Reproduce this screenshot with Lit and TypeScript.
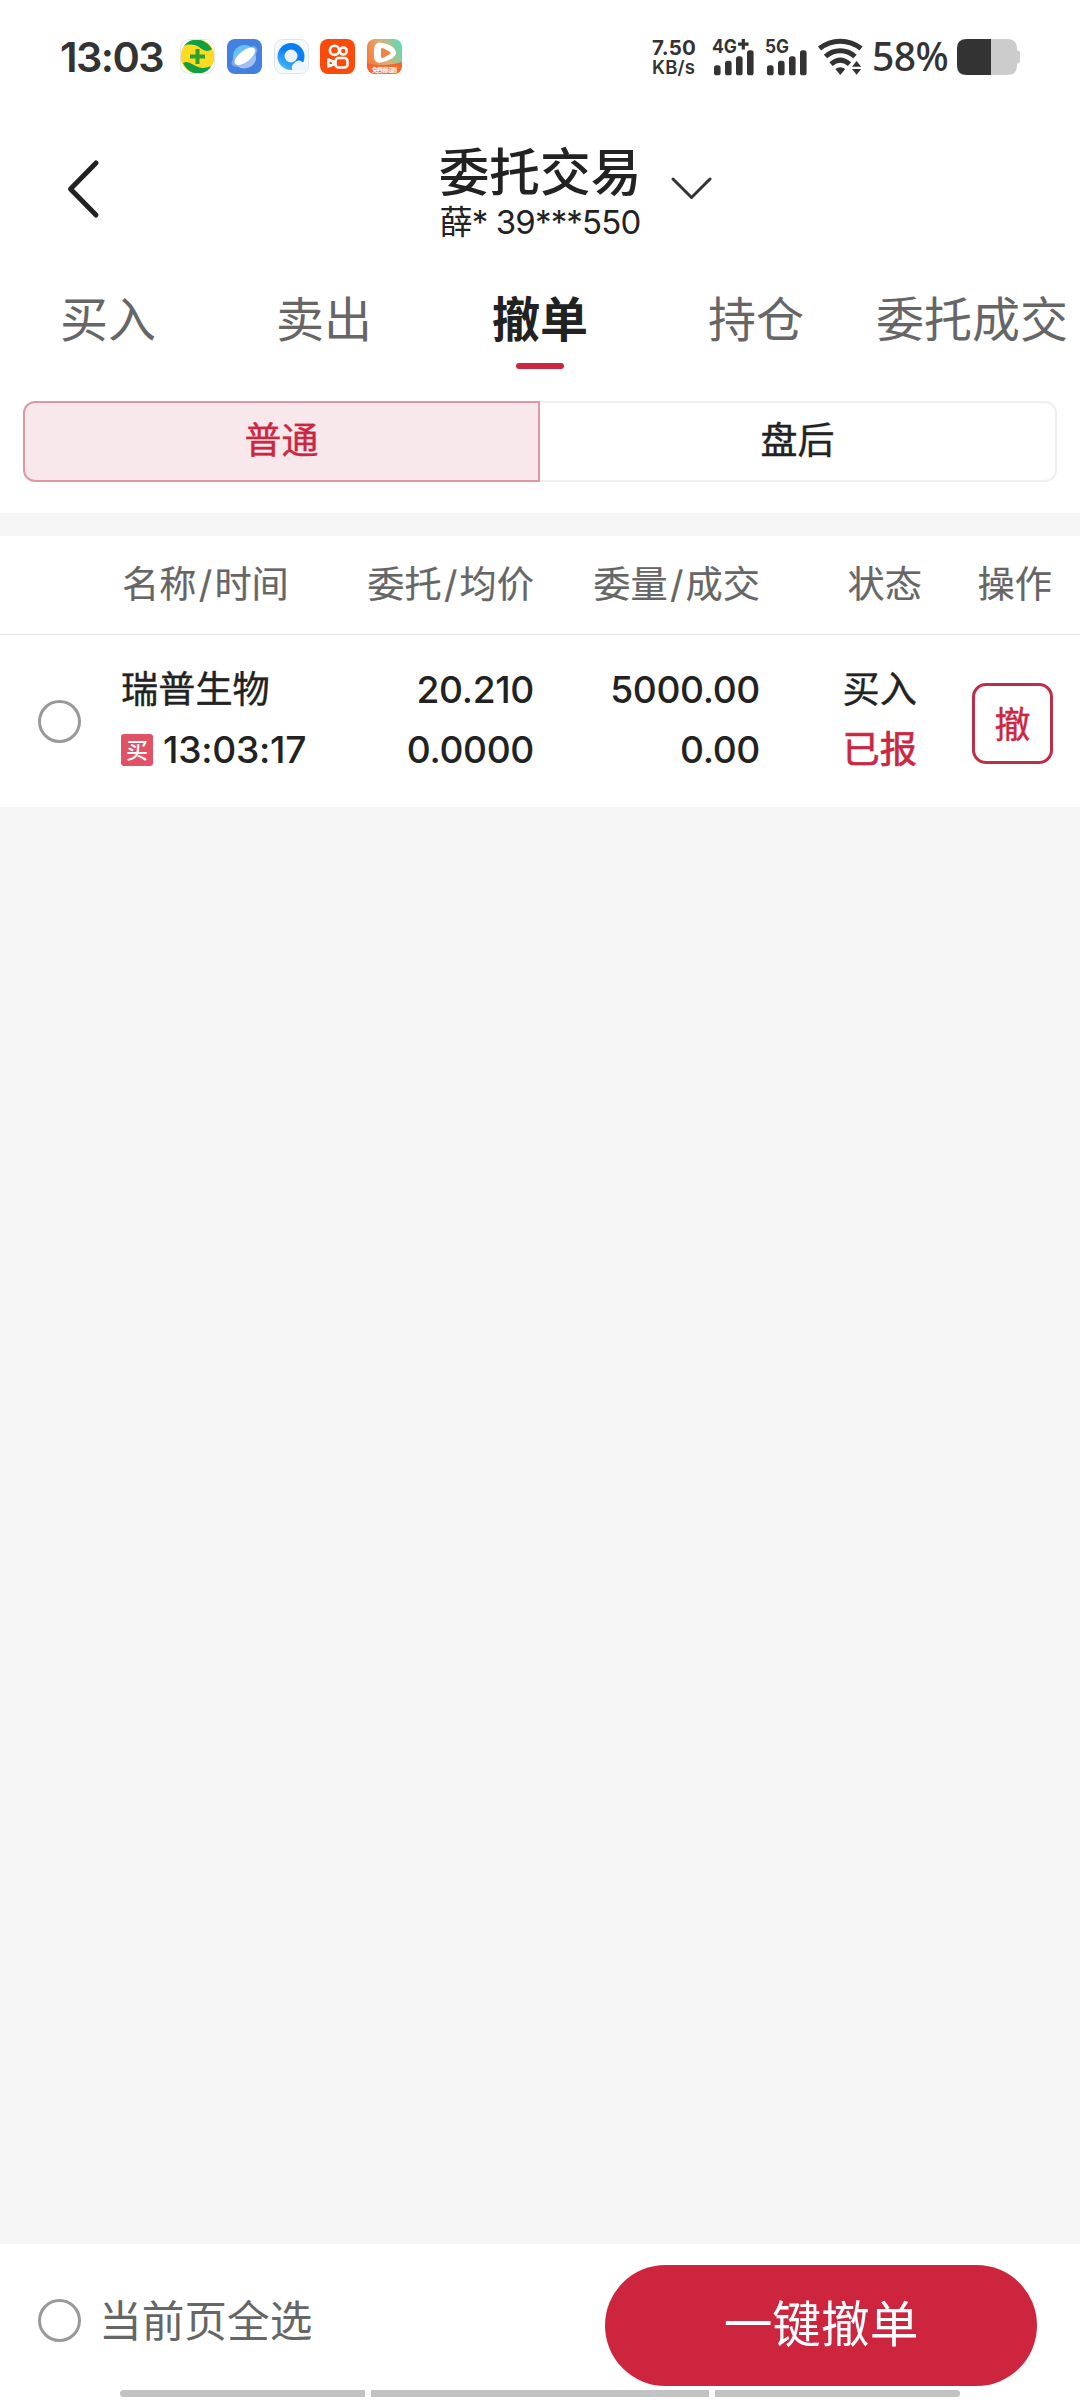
import { LitElement, html, css, svg } from "lit";
import { customElement, property } from "lit/decorators.js";
import { classMap } from "lit/directives/class-map.js";

@customElement("status-bar")
class StatusBar extends LitElement {
  static styles = css`
    :host { display: block; }
    .bar { display: flex; align-items: flex-start; height: 113px; box-sizing: border-box; padding: 39px 60px 0 60px; color: #333; }
    .clock { font-size: 41.5px; line-height: 36px; font-weight: 560; width: 120px; letter-spacing: -1.6px; white-space: nowrap; }
    .apps { display: flex; gap: 11.8px; }
    .apps svg { display: block; width: 35px; height: 35px; }
    .right { margin-left: auto; display: flex; }
    .speed { display: flex; flex-direction: column; width: 60px; font-weight: 700; font-size: 20.5px; line-height: 17px; white-space: nowrap; letter-spacing: 0.3px; }
    .speed .unit { font-size: 18.5px; line-height: 22px; font-weight: 600; letter-spacing: 0.2px; }
    .radio { display: block; width: 160px; height: 38px; overflow: visible; }
    .radio text { font: 700 18.5px Inter, sans-serif; }
    .pct { font-family: "Noto Sans", sans-serif; font-size: 39px; line-height: 34px; font-weight: 500; width: 85px; letter-spacing: -0.5px; white-space: nowrap; }
    .batt { display: block; width: 63px; height: 36px; }
  `;

  private bars(x: number) {
    return [10, 14.5, 19, 25].map(
      (h, i) => svg`<rect x=${x + i * 11} y=${36.3 - h} width="6.6" height=${h} rx="2.6" fill="#333"/>`
    );
  }

  render() {
    return html`
      <div class="bar">
        <div class="clock">13:03</div>
        <div class="apps">
          <svg viewBox="0 0 35 35">
            <defs><clipPath id="c"><rect x="1" y="1" width="33" height="33" rx="9"/></clipPath></defs>
            <rect x=".5" y=".5" width="34" height="34" rx="9" fill="#fff" stroke="#e2e6e2"/>
            <g clip-path="url(#c)">
              <circle cx="17.5" cy="17.5" r="17" fill="#fddb22"/>
              <path d="M4 7C9 -1 24 -3 32 10C27 14 23 11 19 8C14 5 8 5 4 7Z" fill="#0f9f45"/>
              <path d="M3 24C8 21 11 25 16 27C21 30 27 29 31 27C27 36 10 39 3 24Z" fill="#0f9f45"/>
            </g>
            <path d="M17.5 10v15M10 17.5h15" stroke="#2c9f35" stroke-width="4"/>
          </svg>
          <svg viewBox="0 0 35 35">
            <rect width="35" height="35" rx="8" fill="#4380e0"/>
            <circle cx="17.5" cy="17.5" r="11.5" fill="#62c3f4"/>
            <path d="M9 25.5A11.5 11.5 0 0 0 29 17Z" fill="#a6c0f2"/>
            <ellipse cx="17.5" cy="17.5" rx="15" ry="6.5" transform="rotate(-35 17.5 17.5)" fill="#9bb8ef" opacity=".7"/>
            <ellipse cx="18" cy="17.3" rx="12.3" ry="5.6" transform="rotate(-38 18 17.3)" fill="#fff"/>
          </svg>
          <svg viewBox="0 0 35 35">
            <defs><linearGradient id="q" x1="0" y1="1" x2=".7" y2="0"><stop offset="0" stop-color="#5cc8fd"/><stop offset=".6" stop-color="#0b7ff2"/></linearGradient></defs>
            <rect x=".5" y=".5" width="34" height="34" rx="8" fill="#f5f8fc" stroke="#dfe3e8"/>
            <circle cx="17" cy="17.5" r="13.5" fill="url(#q)"/>
            <circle cx="17" cy="17" r="6.5" fill="#eaf1f8"/>
            <path d="M19 31.5a4.500 4.500 0 0 1 1-7a5 5 0 0 1 8-1.500a4.500 4.500 0 0 1 2 8.500Z" fill="#eef5fc"/>
          </svg>
          <svg viewBox="0 0 35 35">
            <rect width="35" height="35" rx="8" fill="#fb4b0a"/>
            <g fill="none" stroke="#fff" stroke-width="2.6" stroke-linejoin="round">
              <circle cx="14.5" cy="11.3" r="4.6"/><circle cx="23.3" cy="12" r="3.5"/>
              <rect x="15.5" y="19" width="12" height="9.5" rx="3"/>
              <path d="M8.3 20.5v7l5-2v-3Z"/>
            </g>
          </svg>
          <svg viewBox="0 0 35 35">
            <defs><linearGradient id="v" x1="0" y1=".6" x2="1" y2=".2"><stop offset="0" stop-color="#f87b35"/><stop offset=".5" stop-color="#dcae76"/><stop offset="1" stop-color="#5bdcb8"/></linearGradient></defs>
            <rect width="35" height="35" rx="8" fill="url(#v)"/>
            <path d="M0 24Q17 29 35 23V27a8 8 0 0 1-8 8H8a8 8 0 0 1-8-8Z" fill="#f4662e"/>
            <path d="M12 4.5Q8 6 8 11V17Q8 24 14 22.5Q28 19 28 13.5Q26 6 12 4.5Z" fill="#fff" stroke="#fff" stroke-width="2" stroke-linejoin="round"/>
            <path d="M15.5 10.5v7l6.5-3.5Z" fill="#ec8445" stroke="#ec8445" stroke-width="3" stroke-linejoin="round"/>
            <text x="17.5" y="33" text-anchor="middle" font-size="6" font-weight="700" fill="#fff" font-family="Noto Sans CJK SC, sans-serif" textLength="25">免费看短剧</text>
          </svg>
        </div>
        <div class="right">
          <div class="speed"><span>7.50</span><span class="unit">KB/s</span></div>
          <svg class="radio" viewBox="0 0 160 38">
            <text x="0" y="14" fill="#333" textLength="25" lengthAdjust="spacingAndGlyphs">4G</text>
            <path d="M31.3 0v10.4M26 5.2h10.6" stroke="#333" stroke-width="3.2"/>
            ${this.bars(2)}
            <text x="53" y="14" fill="#333" textLength="24" lengthAdjust="spacingAndGlyphs">5G</text>
            ${this.bars(55)}
            <g fill="none" stroke="#333" stroke-width="5">
              <path d="M107.5 9.5C119.5 -.3 137 -.3 149 9.5"/>
              <path d="M113.5 17.5C122 9.8 134.5 9.8 143 17.5"/>
              <path d="M119 25.2C125 20 131.5 20 137.5 25.2"/>
            </g>
            <path d="M123.3 30Q128.3 26.7 133.3 30L128.3 36Z" fill="#333"/>
            <path d="M140 27.7l4.6-5.7 4.6 5.7ZM140 30h9.2l-4.6 5.7Z" fill="#333"/>
          </svg>
          <div class="pct">58%</div>
          <svg class="batt" viewBox="0 0 63 36">
            <path d="M34 0H50Q60 0 60 9V11.5Q63 11.5 63 14V22Q63 24.5 60 24.5V27Q60 36 50 36H34Z" fill="#ccc"/>
            <path d="M34 0H10Q0 0 0 9V27Q0 36 10 36H34Z" fill="#333"/>
          </svg>
        </div>
      </div>
    `;
  }
}

@customElement("radio-ring")
class RadioRing extends LitElement {
  static styles = css`
    :host { display: block; width: 43px; height: 43px; flex: none; }
    .ring { width: 43px; height: 43px; box-sizing: border-box; border: 3px solid #999; border-radius: 50%; }
  `;
  render() {
    return html`<div class="ring"></div>`;
  }
}

interface Order {
  name: string;
  time: string;
  price: string;
  avg: string;
  qty: string;
  filled: string;
  side: string;
  state: string;
}

@customElement("order-row")
class OrderRow extends LitElement {
  @property({ attribute: false }) order!: Order;

  static styles = css`
    :host { display: block; }
    .row { display: grid; grid-template-columns: 121px 190px 223px 226px 157px 163px; height: 172px; background: #fff; color: #222; font-size: 37.2px; font-weight: 450; line-height: 60px; white-space: nowrap; }
    .pick { padding: 65px 0 0 38px; }
    .cell { padding-top: 25px; display: flex; flex-direction: column; align-items: flex-start; }
    .name { font-size: 37.2px; font-weight: 400; -webkit-text-stroke: 0.4px currentColor; }
    .num { align-items: flex-end; letter-spacing: -0.35px; }
    .stamp { display: flex; align-items: center; gap: 10px; letter-spacing: -0.25px; }
    .badge { width: 32px; height: 32px; border-radius: 3px; background: #e05265; color: #fff; font-size: 22px; line-height: 32px; text-align: center; }
    .state { align-items: flex-end; font-weight: 400; -webkit-text-stroke: 0.4px currentColor; }
    .red { color: #ca2742; -webkit-text-stroke-width: 0.7px; }
    .act { padding: 48px 0 0 55px; }
    .cancel { width: 81px; height: 81px; box-sizing: border-box; border: 3px solid #c02d46; border-radius: 14px; color: #ca2742; font-size: 36px; font-weight: 400; -webkit-text-stroke: 0.4px currentColor; line-height: 79px; text-align: center; }
  `;

  render() {
    const o = this.order;
    return html`
      <div class="row">
        <div class="pick"><radio-ring></radio-ring></div>
        <div class="cell">
          <span class="name">${o.name}</span>
          <span class="stamp"><span class="badge">${o.side[0]}</span><span>${o.time}</span></span>
        </div>
        <div class="cell num"><span>${o.price}</span><span>${o.avg}</span></div>
        <div class="cell num"><span>${o.qty}</span><span>${o.filled}</span></div>
        <div class="cell state"><span>${o.side}</span><span class="red">${o.state}</span></div>
        <div class="act"><div class="cancel">撤</div></div>
      </div>
    `;
  }
}

@customElement("app-root")
class AppRoot extends LitElement {
  static styles = css`
    :host { display: block; font-family: Inter, "Noto Sans CJK SC", sans-serif; }
    .page { display: flex; flex-direction: column; width: 1080px; height: 2400px; background: #f5f5f5; overflow: hidden; }
    .top { background: #fff; height: 513px; display: flex; flex-direction: column; }
    .head { display: grid; grid-template-columns: 1fr 200px 1fr; height: 153px; color: #222; }
    .back { display: block; width: 34px; height: 60px; margin: 46px 0 0 66px; }
    .down { display: block; width: 41px; height: 24px; margin: 64px 0 0 31px; }
    .title { display: flex; flex-direction: column; align-items: center; white-space: nowrap; }
    .name { font-size: 50.7px; line-height: 60px; font-weight: 500; margin-top: 30px; }
    .acct { font-size: 33px; line-height: 36px; letter-spacing: -0.85px; margin-top: 1px; }
    .tabs { display: grid; grid-template-columns: repeat(5, 216px); height: 135px; }
    .tab { display: flex; flex-direction: column; align-items: center; font-size: 48px; line-height: 60px; padding-top: 24px; color: #666; white-space: nowrap; }
    .tab.on { font-weight: 700; color: #222; }
    .tab.on::after { content: ""; width: 48px; height: 6px; border-radius: 3px; background: #ca2742; margin-top: 13px; }
    .seg { display: grid; grid-template-columns: 1fr 1fr; margin: 0 23px; height: 81px; font-size: 37px; -webkit-text-stroke: 0.4px currentColor; line-height: 76px; text-align: center; color: #222; }
    .opt { box-sizing: border-box; border: 2px solid #efefef; border-left: 0; border-radius: 0 12px 12px 0; }
    .opt.on { border: 2px solid #dd98a4; border-radius: 12px 0 0 12px; background: #f9e8eb; color: #ca2742; }
    .cols { display: grid; grid-template-columns: 122px 189px 223px 226px 162px 130px; background: #fff; margin-top: 23px; height: 99px; box-sizing: border-box; border-bottom: 1px solid #e4e4e4; font-size: 37.2px; line-height: 97px; color: #666; white-space: nowrap; -webkit-text-stroke: 0.2px currentColor; }
    .r { text-align: right; }
    .slash { margin: 0 2.3px; }
    .foot { margin-top: auto; height: 156px; background: #fff; display: flex; flex-direction: column; }
    .bar { display: flex; align-items: flex-start; height: 146px; padding: 0 43px 0 38px; }
    .bar radio-ring { margin-top: 55px; }
    .all { font-size: 42.7px; line-height: 60px; color: #666; margin: 48px 0 0 18px; }
    .go { margin: 21px 0 0 auto; width: 432px; height: 121px; border-radius: 61px; background: #ce253f; color: #fff; font-size: 48.7px; line-height: 120px; text-align: center; }
    .nav { display: flex; gap: 6px; padding-left: 120px; }
    .nav i { height: 7px; background: #c2c2c2; width: 338px; }
    .nav i:first-child { width: 245px; border-radius: 4px 0 0 4px; }
    .nav i:last-child { width: 245px; border-radius: 0 4px 4px 0; }
  `;

  private tabs = ["买入", "卖出", "撤单", "持仓", "委托成交"];
  private heads = [["名称", "时间"], ["委托", "均价"], ["委量", "成交"], ["状态"], ["操作"]];
  private orders: Order[] = [
    { name: "瑞普生物", time: "13:03:17", price: "20.210", avg: "0.0000", qty: "5000.00", filled: "0.00", side: "买入", state: "已报" },
  ];

  render() {
    return html`
      <div class="page">
        <div class="top">
          <status-bar></status-bar>
          <div class="head">
            <svg class="back" viewBox="0 0 34 60"><path d="M30 4L4.5 30L30 56" fill="none" stroke="#222" stroke-width="5" stroke-linecap="round" stroke-linejoin="round"/></svg>
            <div class="title"><div class="name">委托交易</div><div class="acct">薛* 39***550</div></div>
            <svg class="down" viewBox="0 0 41 24"><path d="M2 2L20.5 20.5L39 2" fill="none" stroke="#333" stroke-width="3" stroke-linecap="round" stroke-linejoin="round"/></svg>
          </div>
          <div class="tabs">
            ${this.tabs.map((t, i) => html`<div class=${classMap({ tab: true, on: i === 2 })}>${t}</div>`)}
          </div>
          <div class="seg"><div class="opt on">普通</div><div class="opt">盘后</div></div>
        </div>
        <div class="cols">
          <span></span>
          ${this.heads.map(
            ([a, b], i) => html`<span class=${classMap({ r: i > 0 })}>${a}${b ? html`<span class="slash">/</span>${b}` : ""}</span>`
          )}
        </div>
        ${this.orders.map((o) => html`<order-row .order=${o}></order-row>`)}
        <div class="foot">
          <div class="bar">
            <radio-ring></radio-ring>
            <span class="all">当前页全选</span>
            <div class="go">一键撤单</div>
          </div>
          <div class="nav"><i></i><i></i><i></i></div>
        </div>
      </div>
    `;
  }
}
